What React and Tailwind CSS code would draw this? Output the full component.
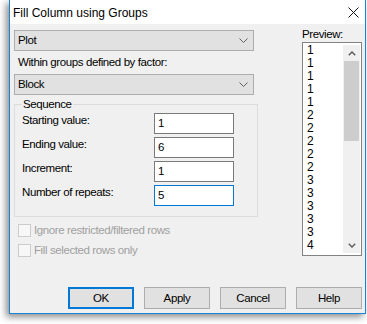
import React from "react"

const preview = [1, 1, 1, 1, 1, 2, 2, 2, 2, 2, 3, 3, 3, 3, 3, 4]

function Chevron({ className = "" }) {
  return (
    <svg width="9" height="5" viewBox="0 0 9 5" className={className}>
      <path d="M0.5 0.5 L4.5 4.5 L8.5 0.5" fill="none" stroke="#606060" strokeWidth="1" />
    </svg>
  )
}

function Combo({ value }) {
  return (
    <div className="h-[21px] w-[240px] border border-[#adadad] bg-[#e1e1e1] flex items-center pl-[3px] pr-[5px]">
      <span className="flex-1 leading-[13px]">{value}</span>
      <Chevron />
    </div>
  )
}

function Field({ label, value, focused }) {
  return (
    <div className="flex items-start h-[21px]">
      <span className="w-[139px] pl-[7px] pt-[1px] leading-[13px]">{label}</span>
      <div
        className={
          "w-[80px] h-[21px] bg-white border flex items-center pl-[3px] leading-[13px] " +
          (focused ? "border-[#0078d7]" : "border-[#7a7a7a]")
        }
      >
        {value}
      </div>
    </div>
  )
}

function Check({ label }) {
  return (
    <div className="flex items-center h-[13px] ml-[4px] gap-[3px]">
      <div className="w-[13px] h-[13px] border border-[#cccccc] bg-[#f7f7f7]" />
      <span className="text-[#a0a0a0] leading-[13px]">{label}</span>
    </div>
  )
}

function Button({ label, primary }) {
  return (
    <button
      className={
        "w-[66px] h-[22px] bg-[#e1e1e1] flex items-center justify-center leading-[13px] " +
        (primary ? "border-2 border-[#0078d7]" : "border border-[#adadad]")
      }
    >
      {label}
    </button>
  )
}

export default function App() {
  return (
    <div className="w-[367px] h-[324px] bg-white font-['Liberation_Sans',Arial,sans-serif] text-[11.5px] tracking-[-0.4px] text-black overflow-hidden">
      <div className="ml-[9px] w-[357px] h-[314px] border border-t-0 border-[#1883d7] bg-[#f0f0f0] flex flex-col shadow-[-3px_3px_7px_rgba(0,0,0,0.45)]">
        {/* Title bar */}
        <div className="h-[24px] bg-white flex items-center pl-[3px] pr-[5px]">
          <span className="flex-1 text-[12px] tracking-normal leading-[14px] pt-[1px]">Fill Column using Groups</span>
          <svg width="11" height="11" viewBox="0 0 11 11" className="mr-[1px]">
            <path d="M0.5 0.5 L10.5 10.5 M10.5 0.5 L0.5 10.5" stroke="#111" strokeWidth="1" />
          </svg>
        </div>

        {/* Body */}
        <div className="flex">
          <div className="ml-[4px] w-[244px] flex flex-col">
            <div className="mt-[6px]">
              <Combo value="Plot" />
            </div>
            <div className="h-[23px] flex items-center pl-[4px] leading-[13px]">Within groups defined by factor:</div>
            <Combo value="Block" />

            {/* Sequence group */}
            <div className="mt-[9px] h-[113px] border border-[#dcdcdc] flex flex-col">
              <span className="-mt-[7px] ml-[7px] self-start bg-[#f0f0f0] px-[1px] leading-[13px] h-[13px]">Sequence</span>
              <div className="mt-[2px] flex flex-col gap-[3px]">
                <Field label="Starting value:" value="1" />
                <Field label="Ending value:" value="6" />
                <Field label="Increment:" value="1" />
                <Field label="Number of repeats:" value="5" focused />
              </div>
            </div>

            <div className="mt-[7px] flex flex-col gap-[7px]">
              <Check label="Ignore restricted/filtered rows" />
              <Check label="Fill selected rows only" />
            </div>
          </div>

          {/* Preview */}
          <div className="ml-[44px] w-[60px] flex flex-col">
            <span className="mt-[4px] leading-[13px] h-[13px]">Preview:</span>
            <div className="mt-[1px] h-[214px] border border-[#828282] bg-white flex overflow-hidden">
              <div className="flex-1 pl-[4px] pt-[1px] text-[12px] tracking-normal">
                {preview.map((n, i) => (
                  <div key={i} className="leading-[13px] h-[13px]">{n}</div>
                ))}
              </div>
              <div className="w-[17px] my-[2px] mr-[1px] bg-[#f0f0f0] flex flex-col">
                <div className="h-[16px] flex items-center justify-center">
                  <svg width="8" height="5" viewBox="0 0 8 5">
                    <path d="M0.8 4.2 L4 1 L7.2 4.2" fill="none" stroke="#606060" strokeWidth="1.5" />
                  </svg>
                </div>
                <div className="h-[80px] bg-[#cdcdcd] mx-[1px]" />
                <div className="flex-1" />
                <div className="h-[16px] flex items-center justify-center">
                  <svg width="8" height="5" viewBox="0 0 8 5">
                    <path d="M0.8 0.8 L4 4 L7.2 0.8" fill="none" stroke="#606060" strokeWidth="1.5" />
                  </svg>
                </div>
              </div>
            </div>
          </div>
        </div>

        {/* Buttons */}
        <div className="mt-auto mb-[4px] mr-[3px] flex justify-end gap-[10px]">
          <Button label="OK" primary />
          <Button label="Apply" />
          <Button label="Cancel" />
          <Button label="Help" />
        </div>
      </div>
    </div>
  )
}
